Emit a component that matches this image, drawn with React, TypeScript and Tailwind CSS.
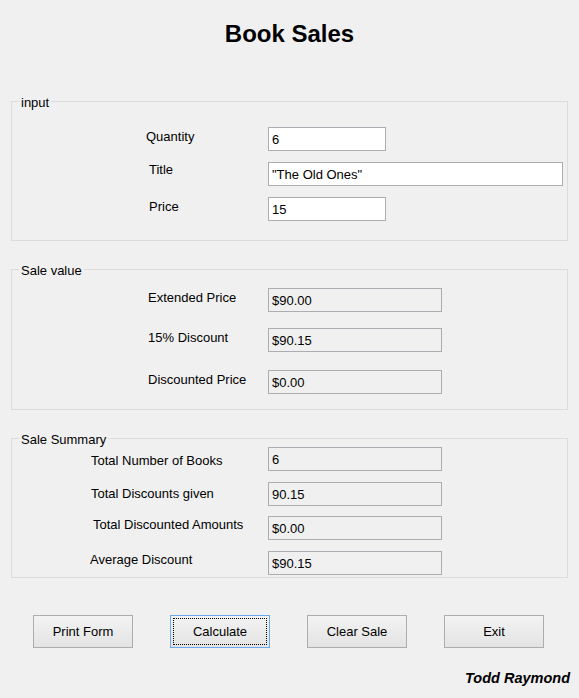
import React from 'react';

type Row = {
  label: string;
  value: string;
  labelClass: string;
  rowClass: string;
  boxClass: string;
};

type Group = {
  title: string;
  groupClass: string;
  rows: Row[];
};

const groups: Group[] = [
  {
    title: 'input',
    groupClass: 'mt-[53px] h-[140px] pt-[25px]',
    rows: [
      { label: 'Quantity', value: '6', labelClass: 'pl-[134px] mt-[2px]', rowClass: 'h-[35px]', boxClass: 'w-[118px] bg-white' },
      { label: 'Title', value: '"The Old Ones"', labelClass: 'pl-[137px] mt-[0px]', rowClass: 'h-[35px]', boxClass: 'w-[295px] bg-white' },
      { label: 'Price', value: '15', labelClass: 'pl-[137px] mt-[2px]', rowClass: 'h-[24px]', boxClass: 'w-[118px] bg-white' },
    ],
  },
  {
    title: 'Sale value',
    groupClass: 'mt-[28px] h-[141px] pt-[18px]',
    rows: [
      { label: 'Extended Price', value: '$90.00', labelClass: 'pl-[136px] mt-[2px]', rowClass: 'h-[40px]', boxClass: 'w-[174px] bg-[#f0f0f0]' },
      { label: '15% Discount', value: '$90.15', labelClass: 'pl-[136px] mt-[2px]', rowClass: 'h-[42px]', boxClass: 'w-[174px] bg-[#f0f0f0]' },
      { label: 'Discounted Price', value: '$0.00', labelClass: 'pl-[136px] mt-[2px]', rowClass: 'h-[24px]', boxClass: 'w-[174px] bg-[#f0f0f0]' },
    ],
  },
  {
    title: 'Sale Summary',
    groupClass: 'mt-[28px] h-[140px] pt-[8px]',
    rows: [
      { label: 'Total Number of Books', value: '6', labelClass: 'pl-[79px] mt-[6px]', rowClass: 'h-[35px]', boxClass: 'w-[174px] bg-[#f0f0f0]' },
      { label: 'Total Discounts given', value: '90.15', labelClass: 'pl-[79px] mt-[4px]', rowClass: 'h-[34px]', boxClass: 'w-[174px] bg-[#f0f0f0]' },
      { label: 'Total Discounted Amounts', value: '$0.00', labelClass: 'pl-[81px] mt-[1px]', rowClass: 'h-[35px]', boxClass: 'w-[174px] bg-[#f0f0f0]' },
      { label: 'Average Discount', value: '$90.15', labelClass: 'pl-[78px] mt-[1px]', rowClass: 'h-[24px]', boxClass: 'w-[174px] bg-[#f0f0f0]' },
    ],
  },
];

const buttons = ['Print Form', 'Calculate', 'Clear Sale', 'Exit'];

const GroupBox = ({ group }: { group: Group }) => (
  <div className={`relative ml-[11px] w-[557px] box-border border border-[#dcdcdc] ${group.groupClass}`}>
    {/* caption sits on the top border */}
    <span className="absolute left-[7px] -top-[7px] bg-[#f0f0f0] px-[2px] text-[13px] leading-[15px] text-black">
      {group.title}
    </span>
    {group.rows.map((row) => (
      <div key={row.label} className={`flex items-start ${row.rowClass}`}>
        <div className={`w-[256px] shrink-0 text-[13px] leading-[15px] text-black whitespace-nowrap ${row.labelClass}`}>
          {row.label}
        </div>
        <input
          readOnly
          value={row.value}
          className={`h-[24px] box-border border border-[#abadb3] px-[3px] pt-[1px] text-[13px] text-black outline-none ${row.boxClass}`}
        />
      </div>
    ))}
  </div>
);

export default function App() {
  return (
    <div
      className="w-[579px] h-[698px] overflow-hidden bg-[#f0f0f0] flex flex-col"
      style={{ fontFamily: '"Liberation Sans", Arial, sans-serif' }}
    >
      <h1 className="mt-[20px] text-center text-[24px] leading-[28px] font-bold text-black">Book Sales</h1>

      {groups.map((g) => (
        <GroupBox key={g.title} group={g} />
      ))}

      <div className="mt-[37px] ml-[33px] flex gap-[37px]">
        {buttons.map((b) => (
          <button
            key={b}
            className={`h-[33px] w-[100px] box-border text-[13px] text-black bg-gradient-to-b from-[#f3f3f3] to-[#e3e3e3] border ${
              b === 'Calculate' ? 'border-[#6aa9eb] p-[2px]' : 'border-[#adadad]'
            }`}
          >
            {b === 'Calculate' ? (
              <span className="flex h-full w-full items-center justify-center border border-dotted border-black">{b}</span>
            ) : (
              b
            )}
          </button>
        ))}
      </div>

      <div className="mt-[22px] pr-[9px] text-right text-[14.5px] leading-[16px] font-bold italic text-black">Todd Raymond</div>
    </div>
  );
}
